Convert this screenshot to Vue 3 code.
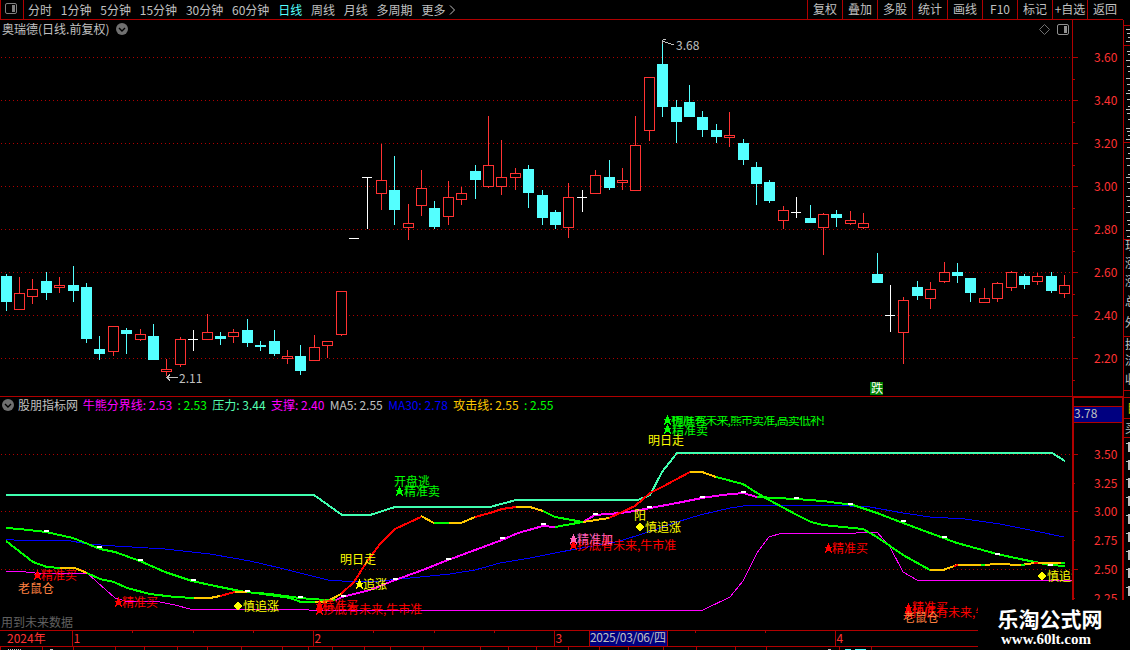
<script setup>
import { ref } from 'vue';

const periods = ['分时', '1分钟', '5分钟', '15分钟', '30分钟', '60分钟', '日线', '周线', '月线', '多周期', '更多'];
const active = ref('日线');
const tools = ['复权', '叠加', '多股', '统计', '画线', 'F10', '标记', '+自选', '返回'];

const indicators = [
  { text: '牛熊分界线: 2.53', color: 'magenta' },
  { text: ': 2.53', color: 'green' },
  { text: '压力: 3.44', color: 'teal' },
  { text: '支撑: 2.40', color: 'magenta' },
  { text: 'MA5: 2.55', color: 'gray' },
  { text: 'MA30: 2.78', color: 'blue' },
  { text: '攻击线: 2.55', color: 'gold' },
  { text: ': 2.55', color: 'green' },
];

// [x, high, bodyTop, bodyBottom, low, type]  u: up, d: down, w: flat
const candles = [
  [6, 274, 276, 302, 311, 'd'], [19, 277, 293, 310, 310, 'u'], [32, 279, 289, 297, 304, 'u'],
  [46, 272, 281, 293, 300, 'd'], [59, 277, 285, 288, 293, 'u'], [73, 266, 285, 291, 302, 'd'],
  [86, 283, 287, 339, 343, 'd'], [99, 336, 349, 354, 360, 'd'], [113, 326, 326, 352, 356, 'u'],
  [126, 328, 330, 334, 354, 'd'], [140, 329, 334, 340, 341, 'u'], [153, 324, 336, 360, 360, 'd'],
  [166, 359, 369, 372, 376, 'u'], [180, 337, 339, 365, 367, 'u'], [193, 330, 339, 340, 351, 'w'],
  [207, 314, 332, 340, 340, 'u'], [220, 332, 336, 339, 345, 'd'], [233, 329, 332, 337, 343, 'u'],
  [247, 319, 330, 343, 347, 'd'], [260, 341, 345, 347, 351, 'd'], [274, 330, 341, 354, 356, 'd'],
  [287, 350, 356, 359, 364, 'u'], [300, 345, 356, 371, 375, 'd'], [314, 335, 347, 361, 361, 'u'],
  [327, 341, 341, 346, 358, 'u'], [341, 291, 291, 335, 336, 'u'], [354, 238, 238, 239, 239, 'w'],
  [367, 177, 177, 178, 229, 'w'], [381, 144, 180, 194, 210, 'u'], [394, 156, 190, 210, 225, 'd'],
  [408, 204, 223, 228, 240, 'u'], [421, 170, 188, 206, 216, 'u'], [434, 201, 208, 227, 229, 'd'],
  [448, 181, 197, 217, 225, 'u'], [461, 187, 193, 200, 205, 'u'], [475, 165, 171, 180, 199, 'd'],
  [488, 116, 165, 187, 188, 'u'], [501, 140, 177, 187, 195, 'u'], [515, 168, 173, 178, 190, 'u'],
  [528, 165, 169, 193, 208, 'd'], [542, 190, 195, 218, 225, 'd'], [555, 210, 212, 225, 229, 'd'],
  [568, 183, 197, 228, 238, 'u'], [582, 190, 197, 198, 212, 'w'], [595, 170, 175, 194, 194, 'u'],
  [609, 160, 177, 188, 190, 'd'], [622, 168, 180, 183, 190, 'u'], [635, 116, 145, 191, 191, 'u'],
  [649, 77, 77, 131, 141, 'u'], [662, 41, 64, 107, 117, 'd'], [676, 100, 107, 122, 143, 'd'],
  [689, 85, 102, 117, 117, 'd'], [702, 111, 117, 130, 137, 'd'], [716, 124, 130, 137, 143, 'd'],
  [729, 112, 135, 138, 147, 'u'], [743, 139, 143, 160, 165, 'd'], [756, 162, 167, 184, 205, 'd'],
  [769, 180, 182, 201, 203, 'd'], [783, 206, 210, 221, 229, 'u'], [796, 197, 212, 213, 218, 'w'],
  [810, 205, 218, 223, 223, 'd'], [823, 213, 214, 228, 255, 'u'], [836, 210, 214, 218, 227, 'd'],
  [850, 211, 220, 224, 225, 'u'], [863, 213, 223, 228, 229, 'u'], [877, 253, 274, 283, 283, 'd'],
  [890, 285, 315, 316, 332, 'w'], [903, 297, 300, 333, 364, 'u'], [917, 281, 287, 296, 300, 'd'],
  [930, 282, 289, 299, 309, 'u'], [944, 262, 272, 282, 283, 'u'], [957, 263, 272, 276, 283, 'd'],
  [970, 278, 278, 293, 302, 'd'], [984, 288, 298, 303, 303, 'u'], [997, 282, 283, 299, 302, 'u'],
  [1011, 271, 272, 288, 291, 'u'], [1024, 274, 276, 285, 289, 'd'], [1037, 273, 276, 282, 285, 'u'],
  [1051, 272, 276, 291, 293, 'd'], [1064, 275, 285, 294, 298, 'u'],
];

const priceTicks = [3.6, 3.4, 3.2, 3.0, 2.8, 2.6, 2.4, 2.2].map((v, i) => ({ label: v.toFixed(2), y: 57 + i * 43 }));
const subTicks = [
  { label: '3.50', y: 454, major: true },
  { label: '3.25', y: 483, major: false },
  { label: '3.00', y: 511, major: true },
  { label: '2.75', y: 540, major: false },
  { label: '2.50', y: 569, major: true },
  { label: '2.25', y: 598, major: false },
];

const lines = [
  { c: 'purple', p: '6,571 26,572 35,573 87,573 115,598 125,601 155,601 175,605 190,609 308,609 309,610 703,610 730,597 743,581 757,553 769,537 782,533 856,533 858,532 877,532 890,547 903,572 917,580 1072,580' },
  { c: 'blue', p: '6,539 14,540 66,540 87,544 115,546 165,549 210,554 250,561 280,568 300,573 328,580 355,582 380,581 410,578 450,574 475,570 500,563 530,558 560,552 588,547 620,541 645,533 677,522 700,515 730,508 750,505 780,505 830,505 870,507 903,513 930,517 965,519 1000,524 1035,531 1064,537' },
  { c: 'teal', p: '6,495 314,495 342,515 370,515 395,507 490,507 516,500 638,500 650,495 662,472 677,453 1052,453 1065,461' },
  // 牛熊分界线
  { c: 'green', p: '6,528 20,529 46,532 73,538 88,544 100,549 115,552 140,561 165,572 192,581 215,586 245,592 270,594 300,598 325,600 336,600' },
  { c: 'magenta', p: '336,600 342,597 370,590 395,580 420,571 448,560 475,550 502,540 518,533 543,526 555,527' },
  { c: 'green', p: '555,527 583,522' },
  { c: 'magenta', p: '583,522 595,515 620,513 635,511 650,508 677,503 702,498 722,495 743,493 757,497' },
  { c: 'green', p: '757,497 796,499 823,501 853,505 877,513 903,523 930,533 957,543 997,554 1020,559 1035,562 1050,565 1065,566' },
  // 攻击线
  { c: 'green', p: '6,541 33,562 47,567 60,568' },
  { c: 'gold', p: '60,568 75,568 87,573' },
  { c: 'green', p: '87,573 100,579 114,582 127,588 150,594 175,597 194,598' },
  { c: 'gold', p: '194,598 210,598 220,596' },
  { c: 'red', p: '220,596 235,592' },
  { c: 'gold', p: '235,592 247,592' },
  { c: 'green', p: '247,592 270,595 290,598 301,602 315,602' },
  { c: 'gold', p: '315,602 326,602 341,594' },
  { c: 'red', p: '341,594 354,582 368,560 380,544 395,529 421,517' },
  { c: 'gold', p: '421,516 434,523' },
  { c: 'green', p: '434,523 449,523' },
  { c: 'gold', p: '449,523 461,523 475,517' },
  { c: 'red', p: '475,517 490,513 502,509 516,507' },
  { c: 'gold', p: '516,507 530,507 543,511' },
  { c: 'green', p: '543,511 555,517 583,522' },
  { c: 'gold', p: '583,522 609,518' },
  { c: 'red', p: '609,518 635,506 650,493 662,487 690,472' },
  { c: 'gold', p: '690,472 702,472 716,477' },
  { c: 'green', p: '716,477 743,484 757,493 769,500 797,515 811,522 823,525 863,529 877,537 903,555 930,570' },
  { c: 'gold', p: '930,570 943,570 957,565 980,565 1000,564 1020,565 1035,563 1065,563' },
  { c: 'red', p: '954,566 958,565' },
  { c: 'green', p: '981,565 985,565' },
  { c: 'green', p: '1021,565 1025,565' },
  { c: 'red', p: '1034,563 1038,563' },
  { c: 'green', p: '1061,563 1065,563' },
];

const marks = [
  [46, 530], [99, 546], [140, 559], [193, 579], [247, 590], [300, 596], [343, 595], [395, 578],
  [448, 558], [502, 537], [543, 523], [595, 513], [649, 506], [702, 496], [743, 491], [796, 497],
  [850, 503], [903, 520], [944, 536], [997, 553], [1050, 564],
];

const stars = [
  [37, 575, 'red'], [118, 602, 'red'], [359, 584, 'yellow'], [399, 491, 'green'], [319, 605, 'red'],
  [319, 610, 'red'], [667, 420, 'green'], [667, 429, 'green'], [573, 545, 'red'], [573, 539, 'pink'],
  [828, 548, 'red'], [908, 608, 'red'], [908, 613, 'red'],
];
const diamonds = [[238, 606], [640, 527], [1042, 576]];

const signals = [
  [41, 569, '精准买', 'red'], [18, 582, '老鼠仓', 'orange'], [122, 596, '精准买', 'red'],
  [243, 600, '慎追涨', 'yellow'], [340, 553, '明日走', 'yellow'], [363, 578, '追涨', 'yellow'],
  [394, 475, '开盘逃', 'green'], [404, 485, '精准卖', 'green'], [322, 599, '精准买', 'red'],
  [323, 603, '抄底有未来,牛市准', 'red'], [648, 434, '明日走', 'yellow'], [672, 424, '精准卖', 'green'],
  [634, 509, '阳', 'yellow'], [645, 521, '慎追涨', 'yellow'], [601, 534, '买', 'red'],
  [577, 539, '抄底有未来,牛市准', 'red'], [577, 533, '精准加', 'pink'], [832, 542, '精准买', 'red'],
  [912, 601, '精准买', 'red'], [912, 606, '抄底有未来,牛市准', 'red'], [903, 611, '老鼠仓', 'orange'],
  [1047, 570, '慎追涨', 'yellow'],
];

const months = [[72, '1'], [313, '2'], [554, '3'], [835, '4']];
const weekTicks = [132, 193, 253, 373, 434, 494, 695, 765];
const footTicks = [0, 42, 73, 115, 144, 177, 207, 241, 282, 308, 332, 364, 390, 423, 480, 508, 536, 568, 599, 628, 663, 696, 735, 766, 839, 871];

const sideTicks = [25, 45, 142, 239, 336, 390, 397, 418, 437];
const sideDashes = [29, 33, 37, 41, 51, 54, 60, 66, 71, 78, 84, 90, 93, 99, 106, 109, 113, 119, 128, 131, 135, 139, 147, 153, 158, 165, 174, 177, 182, 188, 196, 200, 206, 212, 220, 224, 230, 236];
const sideWords = [[250, '现'], [268, '涨'], [286, '涨'], [306, '总'], [327, '外'], [349, '换'], [365, '流'], [384, '收']];
const sideRows = [447, 465, 483, 501, 519, 537, 555, 573, 591];
</script>

<template>
  <div class="screen">
    <div class="toolbar">
      <div class="toggle">
        <svg width="13" height="12" viewBox="0 0 13 12">
          <rect x="0.5" y="0.5" width="11" height="10" rx="1.5" fill="none" stroke="#808080" />
          <rect x="7" y="2" width="3" height="7" fill="#808080" />
        </svg>
      </div>
      <div class="periods">
        <span v-for="p in periods" :key="p" :class="{ active: p === active }" @click="active = p">{{ p }}</span>
        <svg class="more" width="7" height="10" viewBox="0 0 7 10">
          <path d="M1 0.5 L5.5 5 L1 9.5" fill="none" stroke="#c0c0c0" />
        </svg>
      </div>
      <div class="tools">
        <span v-for="t in tools" :key="t">{{ t }}</span>
      </div>
    </div>

    <div class="content">
      <div class="charts">
        <div class="panel price">
          <svg width="1123" height="376" viewBox="0 20 1123 376" shape-rendering="crispEdges">
            <g v-for="t in priceTicks" :key="t.y">
              <line class="grid" x1="1" :y1="t.y + 0.5" x2="1072" :y2="t.y + 0.5" />
              <rect class="frame" x="1073" :y="t.y" width="5" height="1" />
              <rect class="frame" x="1073" :y="t.y + 22" width="2" height="1" />
              <text class="axis" x="1094" :y="t.y + 5">{{ t.label }}</text>
            </g>
            <rect class="frame" x="1072" y="20" width="1" height="376" />
            <g v-for="c in candles" :key="c[0]" :class="c[5]">
              <template v-if="c[5] === 'u'">
                <rect class="body" :x="c[0] - 4.5" :y="c[2] + 0.5" width="10" :height="c[3] - c[2] - 1" />
                <rect class="wick" :x="c[0]" :y="c[1]" width="1" :height="c[2] - c[1]" />
                <rect class="wick" :x="c[0]" :y="c[3]" width="1" :height="c[4] - c[3]" />
              </template>
              <template v-else>
                <rect class="wick" :x="c[0]" :y="c[1]" width="1" :height="c[4] - c[1]" />
                <rect class="wick" :x="c[0] - 5" :y="c[2]" :width="c[5] === 'w' ? 10 : 11" :height="c[3] - c[2]" />
              </template>
            </g>
            <path class="arrow" d="M663 39.5 H666 M663 41.5 L674 45 M662.5 40 V44" />
            <text class="note" x="676" y="50">3.68</text>
            <path class="arrow" d="M167 377.5 H178 M170 374.5 L167 377.5 L170 380.5" />
            <text class="note" x="179" y="383">2.11</text>
            <rect x="870" y="382" width="13" height="13" fill="#008000" />
            <text x="871" y="393" fill="#fff">跌</text>
          </svg>
          <div class="title">
            <span>奥瑞德(日线.前复权)</span>
            <svg width="12" height="12" viewBox="0 0 12 12">
              <circle cx="6" cy="6" r="6" fill="#707070" />
              <path d="M3 5 L6 8 L9 5" fill="none" stroke="#000" stroke-width="1.4" />
            </svg>
          </div>
          <div class="corner">
            <svg width="11" height="11" viewBox="0 0 11 11">
              <path d="M5.5 0.5 L10.5 5.5 L5.5 10.5 L0.5 5.5 Z" fill="none" stroke="#707070" />
            </svg>
            <svg width="12" height="11" viewBox="0 0 12 11">
              <rect x="0.5" y="0.5" width="11" height="10" rx="1.5" fill="none" stroke="#909090" />
              <rect x="7" y="2" width="3" height="7" fill="#909090" />
            </svg>
          </div>
        </div>

        <div class="panel sub">
          <svg width="1123" height="233" viewBox="0 397 1123 233" shape-rendering="crispEdges">
            <defs>
              <clipPath id="top-signal"><rect x="660" y="416" width="180" height="11" /></clipPath>
              <clipPath id="plot"><rect x="0" y="397" width="1072" height="233" /></clipPath>
            </defs>
            <g v-for="t in subTicks" :key="t.y">
              <line v-if="t.major" class="grid" x1="1" :y1="t.y + 0.5" x2="1072" :y2="t.y + 0.5" />
              <rect class="frame" x="1074" :y="t.y" :width="t.major ? 4 : 1" height="1" />
              <text class="axis" x="1094" :y="t.y + 5">{{ t.label }}</text>
            </g>
            <g clip-path="url(#plot)">
              <polyline v-for="(l, i) in lines" :key="i" :class="['line', 's-' + l.c]" :points="l.p" />
              <rect v-for="m in marks" :key="m[0]" :x="m[0] - 2" :y="m[1]" width="5" height="2" fill="#fff" />
              <path
                v-for="(s, i) in stars"
                :key="'s' + i"
                :class="'f-' + s[2]"
                :transform="`translate(${s[0]} ${s[1]})`"
                d="M0.5 -5 L2 -1.5 H5.5 L2.9 0.9 L4 5 L0.5 2.8 L-3 5 L-1.9 0.9 L-4.5 -1.5 H-1 Z"
              />
              <path
                v-for="d in diamonds"
                :key="'d' + d[0]"
                class="f-yellow"
                :transform="`translate(${d[0]} ${d[1]})`"
                d="M0 -4.5 L4.5 0 L0 4.5 L-4.5 0 Z"
              />
              <text v-for="(s, i) in signals" :key="'t' + i" :class="'f-' + s[3]" :x="s[0]" :y="s[1] + 10.5">{{ s[2] }}</text>
              <g clip-path="url(#top-signal)" class="f-green">
                <text x="671" y="423">精准卖</text>
                <text x="672" y="425" textLength="153">抛底有未来,熊市卖准,高卖低补!</text>
              </g>
              <text x="1" y="627" fill="#606060">用到未来数据</text>
            </g>
            <rect class="frame" x="1072" y="397" width="2" height="233" />
            <rect class="frame" x="1122" y="397" width="1" height="233" />
            <rect class="frame" x="1072" y="397" width="51" height="1" />
            <rect class="frame" x="1074" y="406" width="48" height="17" />
            <rect x="1074" y="407" width="48" height="15" fill="#000080" />
            <text class="note" x="1074" y="418">3.78</text>
          </svg>
          <div class="legend">
            <svg width="12" height="12" viewBox="0 0 12 12">
              <circle cx="6" cy="6" r="6" fill="#707070" />
              <path d="M3 5 L6 8 L9 5" fill="none" stroke="#000" stroke-width="1.4" />
            </svg>
            <span class="source">股朋指标网</span>
            <span v-for="(it, i) in indicators" :key="i" :class="'c-' + it.color">{{ it.text }}</span>
          </div>
        </div>

        <div class="timeline">
          <svg width="1123" height="20" viewBox="0 630 1123 20" shape-rendering="crispEdges">
            <rect class="frame" x="0" y="630" width="1123" height="1" />
            <rect class="frame" x="0" y="646" width="1123" height="1" />
            <text class="axis" x="7" y="643">2024年</text>
            <g v-for="m in months" :key="m[0]">
              <rect class="frame" :x="m[0]" y="630" width="1" height="16" />
              <text class="axis" :x="m[0] + 1.5" y="643">{{ m[1] }}</text>
            </g>
            <rect v-for="w in weekTicks" :key="w" class="frame" :x="w" y="631" width="1" height="2" />
            <rect x="589" y="631" width="79" height="15" class="frame" />
            <rect x="590" y="631" width="77" height="15" fill="#000080" />
            <text class="note" x="590" y="642" textLength="76">2025/03/06/四</text>
            <rect v-for="f in footTicks" :key="f" class="frame" :x="f" y="647" width="1" height="3" />
            <path d="M8 649.5 H22" stroke="#c0c0c0" stroke-dasharray="1 1" />
            <path d="M50 649.5 H53 M828 649.5 H831" stroke="#c0c0c0" />
            <path d="M845 649.5 H851 M855 649.5 H866" stroke="#54ffff" />
          </svg>
        </div>
      </div>

      <div class="side">
        <svg width="7" height="630" viewBox="1123 20 7 630" shape-rendering="crispEdges">
          <rect class="frame" x="1123" y="20" width="1" height="630" />
          <rect v-for="y in sideTicks" :key="y" class="frame" x="1123" :y="y" width="7" height="1" />
          <rect v-for="(y, i) in sideDashes" :key="'h' + y" :x="1126 + (i % 3)" :y="y" width="4" height="1" fill="#c0c0c0" />
          <text v-for="w in sideWords" :key="w[0]" class="note" x="1125" :y="w[0]">{{ w[1] }}</text>
          <text x="1127" y="413" fill="#c0c000">目</text>
          <text class="note" x="1125" y="433">买</text>
          <g v-for="y in sideRows" :key="'r' + y" fill="#c0c0c0">
            <rect x="1128" :y="y - 5" width="2" height="10" />
            <rect x="1126" :y="y - 4" width="2" height="1" />
          </g>
        </svg>
      </div>
    </div>

    <div class="watermark">
      <div class="name">乐淘公式网</div>
      <div class="url">www.60lt.com</div>
    </div>
  </div>
</template>

<style>
body {
  margin: 0;
  background: #000;
}
</style>

<style scoped>
.screen {
  position: relative;
  width: 1130px;
  height: 650px;
  overflow: hidden;
  background: #000;
  color: #c0c0c0;
  font-family: 'Noto Sans CJK SC', sans-serif;
  font-size: 12px;
  line-height: 18px;
}

svg {
  display: block;
  flex: none;
}

.toolbar {
  box-sizing: border-box;
  display: flex;
  width: 1123px;
  height: 20px;
  padding-right: 1px;
  border-bottom: 1px solid #b00000;
}

.toggle {
  box-sizing: border-box;
  width: 24px;
  border-left: 1px solid #b00000;
  border-right: 1px solid #b00000;
  padding: 3px 0 0 4px;
}

.periods {
  display: flex;
  align-items: center;
  gap: 8.8px;
  padding-left: 4px;
  white-space: nowrap;
}

.periods .active {
  color: #54ffff;
}

.more {
  margin-left: -5px;
}

.tools {
  display: flex;
  margin-left: auto;
}

.tools span {
  box-sizing: border-box;
  width: 35px;
  border-left: 1px solid #b00000;
  text-align: center;
  white-space: nowrap;
}

.content {
  display: flex;
}

.charts {
  width: 1123px;
}

.panel {
  position: relative;
}

.price {
  border-bottom: 1px solid #b00000;
}

.title {
  position: absolute;
  top: 0;
  left: 2px;
  display: flex;
  align-items: center;
  gap: 7px;
}

.corner {
  position: absolute;
  top: 4px;
  left: 1039px;
  display: flex;
  gap: 7px;
}

.legend {
  position: absolute;
  top: -1px;
  left: 2px;
  display: flex;
  align-items: center;
  gap: 5.4px;
  white-space: nowrap;
}

.source {
  margin: 0 -0.5px 0 -1.5px;
}

.frame {
  fill: #b00000;
}

.grid {
  stroke: #b00000;
  stroke-dasharray: 1 3;
}

.axis {
  fill: #ff3232;
}

.note {
  fill: #c0c0c0;
}

.arrow {
  fill: none;
  stroke: #c0c0c0;
}

.u .body {
  fill: #000;
  stroke: #ff3232;
}

.u .wick {
  fill: #ff3232;
}

.d .wick {
  fill: #54ffff;
}

.w .wick {
  fill: #fff;
}

/* 指标线 */
.line {
  fill: none;
  stroke-width: 2;
}

.s-purple {
  stroke: #ff00ff;
  stroke-width: 1;
}

.s-blue {
  stroke: #0000ff;
  stroke-width: 1;
}

.s-teal {
  stroke: #40ffb0;
}

.s-green {
  stroke: #00ff00;
}

.s-magenta {
  stroke: #ff00ff;
}

.s-gold {
  stroke: #ffc800;
}

.s-red {
  stroke: #ff0000;
}

.f-red {
  fill: #ff0000;
}

.f-green {
  fill: #00ff00;
}

.f-yellow {
  fill: #ffff00;
}

.f-orange {
  fill: #ff8040;
}

.f-pink {
  fill: #ff60b8;
}

.c-magenta {
  color: #ff00ff;
}

.c-green {
  color: #00ff00;
}

.c-teal {
  color: #54ffb0;
}

.c-blue {
  color: #0000ff;
}

.c-gold {
  color: #ffc800;
}

.watermark {
  position: absolute;
  right: 0;
  bottom: 0;
  box-sizing: border-box;
  width: 152px;
  height: 50px;
  padding: 6px 8px 0 0;
  background: #000;
  color: #fff;
  text-align: center;
  font-weight: bold;
}

.name {
  font-size: 21px;
  line-height: 24px;
}

.url {
  padding-right: 8px;
  font-family: 'Liberation Serif', serif;
  font-size: 15px;
  line-height: 18px;
}
</style>
